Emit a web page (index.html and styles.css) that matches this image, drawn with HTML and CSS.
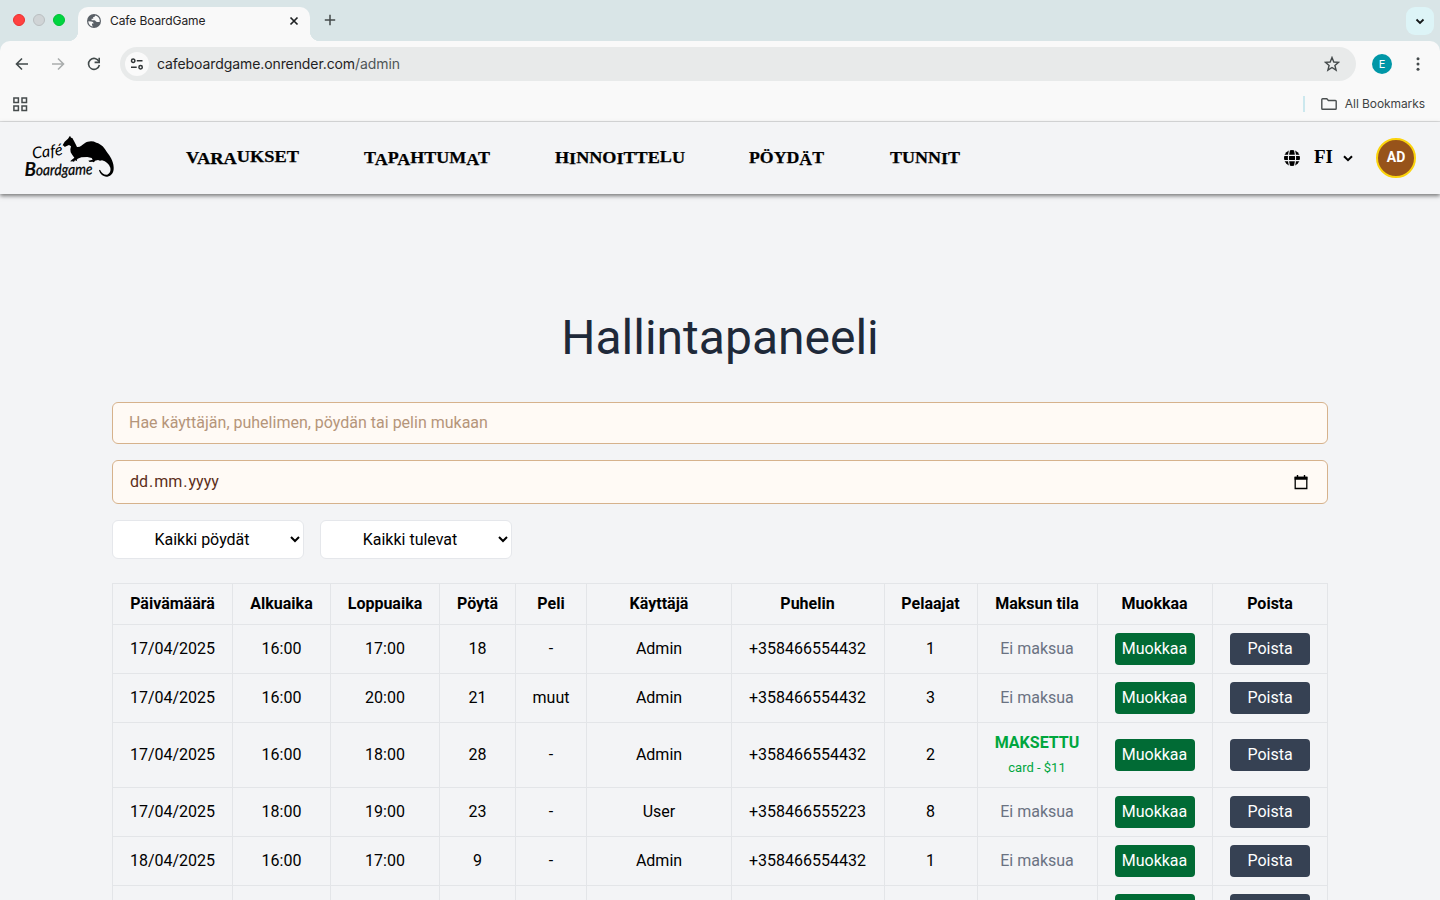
FILE: index.html
```html
<!DOCTYPE html>
<html lang="fi">
<head>
<meta charset="utf-8">
<title>Cafe BoardGame</title>
<link rel="stylesheet" href="styles.css">
</head>
<body>
<div class="browser">
  <div class="tabstrip">
    <div class="lights"><i class="light red"></i><i class="light gray"></i><i class="light green"></i></div>
    <div class="tab">
      <svg class="favicon" width="14" height="14" viewBox="0 0 14 14"><circle cx="7" cy="7" r="7" fill="#5a6067"/><path d="M1.3 7.2 4.2 7.6c1.3.2 2.4.8 2.4 1.9H5v1.6c0 .5.3.8.8.8v.7A5.7 5.7 0 0 1 1.3 7.200zM8.200 1.500c-.3 1-.9 1.500-2 1.500v1.700H4.600v1.500h2.700c1.500 0 1.500 1.800 2.900 1.800h2.500A5.700 5.700 0 0 0 8.200 1.500z" fill="#f9f9f9"/></svg>
      <span class="tab-title">Cafe BoardGame</span>
      <svg class="close" width="10" height="10" viewBox="0 0 10 10"><path d="M1.500 1.500l7 7M8.500 1.500l-7 7" stroke="#1f2223" stroke-width="1.700"/></svg>
    </div>
    <svg class="plus" width="12" height="12" viewBox="0 0 12 12"><path d="M6 .8v10.400M.8 6h10.400" stroke="#444a4b" stroke-width="1.500"/></svg>
    <div class="tab-search"><svg width="10" height="7" viewBox="0 0 10 7"><path d="M1.500 1.500 5 5l3.500-3.500" fill="none" stroke="#15191a" stroke-width="1.800"/></svg></div>
  </div>
  <div class="toolbar">
    <svg class="tool" width="14" height="14" viewBox="0 0 14 14"><path d="M13 7H2M7 1.500 1.500 7 7 12.500" fill="none" stroke="#424a4b" stroke-width="1.600"/></svg>
    <svg class="tool" width="14" height="14" viewBox="0 0 14 14"><path d="M1 7h11M7 1.500 12.500 7 7 12.500" fill="none" stroke="#aaadad" stroke-width="1.600"/></svg>
    <svg class="tool" width="14" height="14" viewBox="0 0 14 14"><path d="M12 4.500A5.500 5.500 0 1 0 12.400 8" fill="none" stroke="#424a4b" stroke-width="1.600"/><path d="M13 .7v5.500H7.600V4.600h3.800V.7z" fill="#424a4b"/></svg>
    <div class="omnibox">
      <div class="site"><svg width="14" height="12" viewBox="0 0 14 12"><g fill="none" stroke="#303536" stroke-width="1.500"><circle cx="3.200" cy="2.700" r="1.700"/><path d="M6.800 2.700h5.700M1 9.300h5.700"/><circle cx="10.600" cy="9.300" r="1.700"/></g></svg></div>
      <span class="url">cafeboardgame.onrender.com<span class="path">/admin</span></span>
      <svg class="star" width="16" height="16" viewBox="0 0 16 16"><path d="M8 1.500l1.800 4.500 4.800.3-3.700 3.100 1.200 4.700L8 11.500l-4.100 2.600 1.200-4.700L1.400 6.300 6.200 6z" fill="none" stroke="#444a4b" stroke-width="1.400"/></svg>
    </div>
    <div class="profile">E</div>
    <svg class="dots" width="4" height="14" viewBox="0 0 4 14" fill="#444a4b"><circle cx="2" cy="1.700" r="1.500"/><circle cx="2" cy="7" r="1.500"/><circle cx="2" cy="12.300" r="1.500"/></svg>
  </div>
  <div class="bookmarks">
    <svg width="15" height="15" viewBox="0 0 15 15" fill="none" stroke="#464b4c" stroke-width="1.500"><path d="M.9.9h4.500v4.500H.9zM9 .9h4.500v4.500H9zM.9 9h4.500v4.500H.9zM9 9h4.500v4.500H9z"/></svg>
    <div class="all"><i class="divider"></i><svg width="16" height="12" viewBox="0 0 16 12"><path d="M.8 10.400V1.600q0-.8.8-.8h4.200l1.600 1.700h7q.8 0 .8.8v7.100q0 .8-.8.8H1.600q-.8 0-.8-.8z" fill="none" stroke="#4a4f50" stroke-width="1.400"/></svg><span>All Bookmarks</span></div>
  </div>
</div>

<header class="site-header">
  <svg class="logo" width="91" height="46" viewBox="42 30 273 138">
    <text class="logo-cafe" transform="translate(68 101) rotate(-7)" textLength="92" lengthAdjust="spacingAndGlyphs">Café</text>
    <text class="logo-board" transform="translate(44 152) rotate(-1)"><tspan class="logo-initial">B</tspan><tspan textLength="170" lengthAdjust="spacingAndGlyphs">oardgame</tspan></text>
    <path transform="translate(150 15)" d="M10 42 14 35 24 26 30 17 33 23 37 24 42 33 47 43 51 51C61 52 66 46 74 40 84 33 98 32 109 38 124 42 134 53 141 67 150 79 160 92 161 112 162 129 154 138 142 140 129 141 120 132 117 121L120 119C125 129 131 134 140 134 149 132 153 123 151 113 147 102 138 94 126 91L120 92 114 90 105 92 102 97 97 95 89 96 85 92 98 89 95 84 82 81 64 82 53 86 50 90 52 94 45 91 42 95 36 94 32 95 32 92 43 83 37 75 32 67 31 58 33 49 27 45 20 48 14 51 12 48 8 46z"/>
  </svg>
  <nav class="nav">
    <svg class="w115" height="24"><text x="1" y="17" textLength="113" lengthAdjust="spacingAndGlyphs" dy="0 1 0 0 -2 0 0 0 0">VARAUKSET</text></svg>
    <svg class="w127" height="24"><text x="0" y="16.500" textLength="126" lengthAdjust="spacingAndGlyphs" dy="0 2 -2 2 -2 0 0 0 2 -2">TAPAHTUMAT</text></svg>
    <svg class="w131" height="24"><text x="0" y="16.500" textLength="130" lengthAdjust="spacingAndGlyphs" dy="0 1 -1 0 0 1 -1 0 0 -1 1">HINNOITTELU</text></svg>
    <svg class="w77" height="24"><text x="-1" y="16.500" textLength="75" lengthAdjust="spacingAndGlyphs" dy="0 0 0 0 2 -2">PÖYDÄT</text></svg>
    <svg class="w71" height="24"><text x="-1" y="16.500" textLength="70" lengthAdjust="spacingAndGlyphs" dy="0 0 0 0 1 -1">TUNNIT</text></svg>
  </nav>
  <div class="account">
    <svg width="16" height="16" viewBox="0 0 16 16"><circle cx="8" cy="8" r="8"/><path d="M0 5.400h16M0 10.600h16M5.500 0Q3.300 8 5.500 16M10.500 0q2.200 8 0 16" stroke="#f3f4f6" stroke-width="1.100" fill="none"/></svg>
    <span class="lang">FI</span>
    <svg class="chev" width="10" height="7" viewBox="0 0 10 7"><path d="M1 1.200l4 4 4-4" fill="none" stroke="#000" stroke-width="2"/></svg>
    <div class="avatar">AD</div>
  </div>
</header>

<main class="main">
  <h1>Hallintapaneeli</h1>
  <input class="field search" placeholder="Hae käyttäjän, puhelimen, pöydän tai pelin mukaan">
  <div class="field date"><span>dd<i>.</i>mm<i>.</i>yyyy</span><svg width="14" height="15" viewBox="0 0 14 15"><path d="M1.200 2.500h11.600v11H1.200z" fill="none" stroke="#000" stroke-width="1.300"/><path d="M.6 1.800h12.800v3H.6zM2.800 0h1.400v2H2.800zM9.800 0h1.400v2H9.800z"/></svg></div>
  <div class="filters"><select><option>Kaikki pöydät</option></select><select><option>Kaikki tulevat</option></select></div>
  <table>
    <colgroup><col class="c120"><col class="c98"><col class="c109"><col class="c76"><col class="c71"><col class="c145"><col class="c153"><col class="c93"><col class="c120"><col class="c115"><col class="c115"></colgroup>
    <thead><tr><th>Päivämäärä</th><th>Alkuaika</th><th>Loppuaika</th><th>Pöytä</th><th>Peli</th><th>Käyttäjä</th><th>Puhelin</th><th>Pelaajat</th><th>Maksun tila</th><th>Muokkaa</th><th>Poista</th></tr></thead>
    <tbody>
      <tr><td>17/04/2025</td><td>16:00</td><td>17:00</td><td>18</td><td>-</td><td>Admin</td><td>+358466554432</td><td>1</td><td class="unpaid">Ei maksua</td><td><button class="edit">Muokkaa</button></td><td><button class="delete">Poista</button></td></tr>
      <tr><td>17/04/2025</td><td>16:00</td><td>20:00</td><td>21</td><td>muut</td><td>Admin</td><td>+358466554432</td><td>3</td><td class="unpaid">Ei maksua</td><td><button class="edit">Muokkaa</button></td><td><button class="delete">Poista</button></td></tr>
      <tr class="tall"><td>17/04/2025</td><td>16:00</td><td>18:00</td><td>28</td><td>-</td><td>Admin</td><td>+358466554432</td><td>2</td><td class="paid"><b>MAKSETTU</b><small>card - $11</small></td><td><button class="edit">Muokkaa</button></td><td><button class="delete">Poista</button></td></tr>
      <tr><td>17/04/2025</td><td>18:00</td><td>19:00</td><td>23</td><td>-</td><td>User</td><td>+358466555223</td><td>8</td><td class="unpaid">Ei maksua</td><td><button class="edit">Muokkaa</button></td><td><button class="delete">Poista</button></td></tr>
      <tr><td>18/04/2025</td><td>16:00</td><td>17:00</td><td>9</td><td>-</td><td>Admin</td><td>+358466554432</td><td>1</td><td class="unpaid">Ei maksua</td><td><button class="edit">Muokkaa</button></td><td><button class="delete">Poista</button></td></tr>
      <tr class="cut"><td></td><td></td><td></td><td></td><td></td><td></td><td></td><td></td><td></td><td><button class="edit"></button></td><td><button class="delete"></button></td></tr>
    </tbody>
  </table>
</main>
</body>
</html>
```
FILE: styles.css
```css
* { box-sizing: border-box; }
html, body { height: 900px; overflow: hidden; }
body { margin: 0; background: #f3f4f6; font: 16px/24px Roboto, sans-serif; color: #000; }
svg { display: block; flex: none; }
.browser { height: 122px; background: #d9e5e7; font-family: Inter, sans-serif; }
.tabstrip { height: 41px; display: flex; align-items: flex-start; }
.lights { display: flex; gap: 8px; padding: 14px 0 0 13px; width: 78px; }
.light { width: 12px; height: 12px; border-radius: 50%; border: 1px solid; }
.red { background: #ff4140; border-color: #ec2e2d; }
.gray { background: #d0d4d6; border-color: #babfc1; }
.green { background: #00d540; border-color: #00c035; }
.tab { position: relative; margin-top: 7px; width: 232px; height: 34px; background: #f9f9f9; border-radius: 10px 10px 0 0; display: flex; align-items: center; padding: 0 11px 6px 9px; }
.tab::before, .tab::after { content: ""; position: absolute; bottom: 0; width: 10px; height: 10px; }
.tab::before { left: -10px; background: radial-gradient(circle at 0 0, transparent 10px, #f9f9f9 10.5px); }
.tab::after { right: -10px; background: radial-gradient(circle at 100% 0, transparent 10px, #f9f9f9 10.5px); }
.tab-title { margin-left: 9px; font-size: 12px; letter-spacing: -.1px; color: #1f2223; }
.close { margin-left: auto; }
.plus { margin: 14px 0 0 14px; }
.tab-search { margin: 7px 6px 0 auto; width: 28px; height: 28px; border-radius: 9px; background: #ddf4f7; display: flex; align-items: center; justify-content: center; }
.toolbar { height: 46px; background: #f9f9f9; border-radius: 10px 10px 0 0; display: flex; align-items: center; padding-left: 15px; }
.tool { margin-right: 22px; }
.omnibox { margin-left: -3px; width: 1236px; height: 34px; border-radius: 17px; background: #e8eaea; display: flex; align-items: center; padding: 0 16px 0 5px; }
.site { width: 24px; height: 24px; border-radius: 50%; background: #fafafa; display: flex; align-items: center; justify-content: center; }
.url { margin-left: 8px; font-size: 14px; letter-spacing: -.09px; color: #1f2223; }
.path { color: #505657; }
.star { margin-left: auto; }
.profile { margin-left: 16px; width: 20px; height: 20px; border-radius: 50%; background: #0097a7; color: #fff; font-size: 11px; line-height: 20px; text-align: center; }
.dots { margin-left: 24px; }
.bookmarks { height: 35px; background: #f9f9f9; border-bottom: 1px solid #dedfe0; display: flex; align-items: center; justify-content: space-between; padding: 0 15px 0 13px; }
.all { display: flex; align-items: center; font-size: 12px; letter-spacing: -.08px; color: #3f4445; }
.divider { width: 2px; height: 16px; background: #cce8ee; margin-right: 16px; }
.all span { margin-left: 8px; }
.site-header { height: 72px; display: flex; align-items: center; padding: 0 24px; box-shadow: 0 2px 4px rgba(0,0,0,.5); }
.logo { fill: #000; overflow: visible; }
.logo-cafe { font: italic 48px Lato, sans-serif; }
.logo-board { font: italic 46px Lato, sans-serif; stroke: #000; stroke-width: .8px; }
.logo-initial { font-size: 56px; stroke-width: 2px; }
.nav { display: flex; gap: 64px; margin-left: 70px; font: bold 16.5px "Liberation Serif", serif; }
.nav svg { overflow: visible; }
.nav text { stroke: #000; stroke-width: .25px; }
.w115 { width: 115px; } .w127 { width: 127px; } .w131 { width: 131px; } .w77 { width: 77px; } .w71 { width: 71px; }
.account { margin-left: auto; display: flex; align-items: center; }
.lang { margin: -2px 0 0 14px; width: 20px; font: bold 19px/24px "Liberation Serif", serif; }
.chev { margin-left: 9px; }
.avatar { margin-left: 23px; width: 40px; height: 40px; border: 2px solid #fbd30b; border-radius: 50%; background: #97531a; color: #fff; font-weight: 700; font-size: 14px; line-height: 35px; text-align: center; }
.main { padding: 120px 112px 0; }
h1 { margin: 0 0 40px; font-size: 48px; line-height: 48px; font-weight: 400; color: #1e2939; text-align: center; }
.field { display: flex; align-items: center; width: 100%; border: 1px solid #d6b28c; border-radius: 6px; background: #fffaf5; padding: 0 16px; font: 16px/24px Roboto, sans-serif; }
.search { height: 42px; margin: 0 0 16px; padding-bottom: 1px; }
.search::placeholder { color: #b5957a; opacity: 1; }
.date { height: 44px; padding: 0 19px 0 17px; justify-content: space-between; color: #5c2e1a; }
.date i { font-style: normal; padding: 0 1px; }
.filters { display: flex; gap: 16px; margin: 16px 0 24px; }
select { width: 192px; height: 39px; border: 1px solid #e5e7eb; border-radius: 6px; background: #fff; color: #000; font: 16px Roboto, sans-serif; text-align: center; padding: 0; }
table { width: 1216px; table-layout: fixed; border-collapse: collapse; text-align: center; }
.c120 { width: 120px; } .c98 { width: 98px; } .c109 { width: 109px; } .c76 { width: 76px; } .c71 { width: 71px; } .c145 { width: 145px; } .c153 { width: 153px; } .c93 { width: 93px; } .c115 { width: 115px; }
th, td { border: 1px solid #e3e5e8; padding: 0; white-space: nowrap; }
th:nth-child(n+7):nth-child(-n+10), td:nth-child(n+7):nth-child(-n+9) { padding-right: 1px; }
th { height: 41px; font-weight: 700; }
td { height: 49px; }
.tall td { height: 65px; }
button { display: block; width: 80px; height: 32px; margin: 0 auto; border: 0; border-radius: 4px; padding: 0 0 2px; color: #fff; font: 16px Roboto, sans-serif; }
.edit { background: #016b35; padding-right: 1px; }
.delete { background: #364153; }
.unpaid { color: #6a7282; }
.paid { color: #00a63e; }
.paid b, .paid small { display: block; }
.paid small { padding-top: 1px; font-size: 13px; }
.cut td { height: 15px; vertical-align: top; padding-top: 8px; }
.cut button { height: 6px; border-radius: 4px 4px 0 0; }
```
